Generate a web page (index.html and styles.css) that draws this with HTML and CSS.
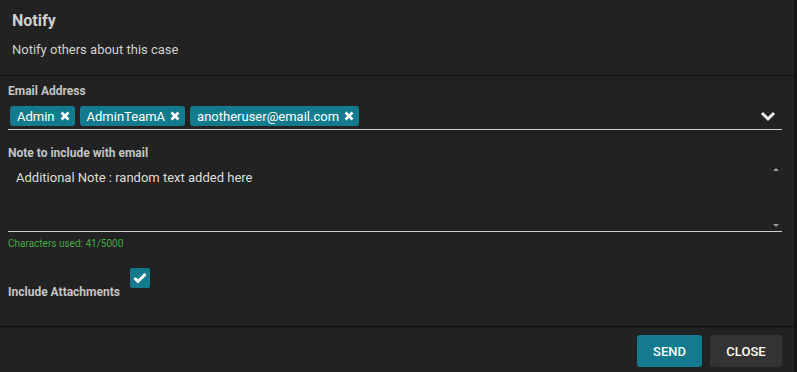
FILE: index.html
```html
<!DOCTYPE html>
<html>

<head>
  <title>Notify</title>
  <link rel="stylesheet" href="styles.css">
</head>

<body>
  <div class="dialog">
    <div class="dialog-header">
      <div class="dialog-title">Notify</div>
      <div class="dialog-subtitle">Notify others about this case</div>
    </div>

    <div class="dialog-body">
      <div class="field-label">Email Address</div>
      <div class="chip-field">
        <span class="chip">Admin
          <svg class="chip-x" width="10" height="10" viewBox="0 0 10 10"><path d="M1.5 1.5 L8.5 8.5 M8.5 1.5 L1.5 8.5" stroke="#fff" stroke-width="2.6"/></svg>
        </span>
        <span class="chip">AdminTeamA
          <svg class="chip-x" width="10" height="10" viewBox="0 0 10 10"><path d="M1.5 1.5 L8.5 8.5 M8.5 1.5 L1.5 8.5" stroke="#fff" stroke-width="2.6"/></svg>
        </span>
        <span class="chip">anotheruser@email.com
          <svg class="chip-x" width="10" height="10" viewBox="0 0 10 10"><path d="M1.5 1.5 L8.5 8.5 M8.5 1.5 L1.5 8.5" stroke="#fff" stroke-width="2.6"/></svg>
        </span>
        <svg class="chevron" width="16" height="12" viewBox="0 0 16 12">
          <path d="M2 3 L8 9 L14 3" fill="none" stroke="#eee" stroke-width="3"/>
        </svg>
      </div>

      <div class="field-label note-label">Note to include with email</div>
      <div class="note-box">
        Additional Note : random text added here
        <span class="arrow-up"></span>
        <span class="arrow-down"></span>
      </div>
      <div class="char-count">Characters used: 41/5000</div>

      <div class="attach-row">
        <span class="field-label">Include Attachments</span>
        <span class="checkbox">
          <svg width="14" height="12" viewBox="0 0 14 12">
            <path d="M1.5 6 L5 9.5 L12.5 2" fill="none" stroke="#fff" stroke-width="3"/>
          </svg>
        </span>
      </div>
    </div>

    <div class="dialog-footer">
      <button class="btn btn-send">Send</button>
      <button class="btn btn-close">Close</button>
    </div>
  </div>
  <div class="scroll-strip"></div>
</body>

</html>
```

FILE: styles.css
```css
/* Reset default margin and padding for body */
body {
  margin: 0;
  padding: 0;
  display: flex;
  height: 372px;
  overflow: hidden;
  background-color: #222;
  font-family: Roboto, 'Liberation Sans', sans-serif;
  color: #ccc;
}

/* Main dialog column */
.dialog {
  flex: 1;
  display: flex;
  flex-direction: column;
}

/* Dark strip on the right edge */
.scroll-strip {
  width: 3px;
  background-color: #141414;
}

/* Header */
.dialog-header {
  box-sizing: border-box;
  height: 76px;
  padding: 11px 12px 0 12px;
  border-bottom: 1px solid #0e0e0e;
}

.dialog-title {
  font-size: 16px;
  font-weight: bold;
  line-height: 20px;
  color: #d0d0d0;
}

.dialog-subtitle {
  font-size: 13px;
  line-height: 18px;
  margin-top: 10px;
  color: #d0d0d0;
}

/* Body */
.dialog-body {
  flex: 1;
  padding: 7px 12px 0 8px;
}

.field-label {
  font-size: 12px;
  font-weight: bold;
  line-height: 16px;
  color: #c4c4c4;
}

/* Email chips */
.chip-field {
  display: flex;
  align-items: center;
  gap: 5px;
  margin-top: 7px;
  padding: 0 0 3px 2px;
  border-bottom: 1px solid #cfcfcf;
}

.chip {
  display: inline-flex;
  align-items: center;
  height: 20px;
  padding: 0 5px 0 7px;
  background-color: #137b8d;
  border-radius: 3px;
  color: #fff;
  font-size: 13px;
}

.chip-x {
  margin-left: 5px;
}

.chevron {
  margin-left: auto;
  margin-right: 6px;
}

/* Note textarea */
.note-label {
  margin-top: 15px;
}

.note-box {
  position: relative;
  height: 61px;
  margin-top: -2px;
  padding: 10px 8px 0 8px;
  border-top: 1px solid #262626;
  border-bottom: 1px solid #cfcfcf;
  font-size: 13px;
  color: #ddd;
}

.arrow-up,
.arrow-down {
  position: absolute;
  right: 3px;
  width: 0;
  height: 0;
  border-left: 3px solid transparent;
  border-right: 3px solid transparent;
}

.arrow-up {
  top: 8px;
  border-bottom: 3px solid #999;
}

.arrow-down {
  bottom: 4px;
  border-top: 3px solid #999;
}

.char-count {
  font-size: 10px;
  line-height: 12px;
  margin-top: 6px;
  color: #43a843;
}

/* Include attachments */
.attach-row {
  display: flex;
  align-items: flex-end;
  margin-top: 18px;
}

.attach-row .field-label {
  margin-bottom: -12px;
}

.checkbox {
  display: inline-flex;
  align-items: center;
  justify-content: center;
  width: 20px;
  height: 20px;
  margin-left: 10px;
  background-color: #137b8d;
  border-radius: 2px;
}

/* Footer */
.dialog-footer {
  box-sizing: border-box;
  display: flex;
  justify-content: flex-end;
  gap: 8px;
  height: 46px;
  padding: 8px 12px 0 0;
  border-top: 1px solid #0e0e0e;
}

.btn {
  height: 32px;
  border: none;
  border-radius: 3px;
  font-family: Roboto, 'Liberation Sans', sans-serif;
  font-size: 13px;
  font-weight: 500;
  text-transform: uppercase;
  color: #fff;
  cursor: pointer;
}

.btn-send {
  width: 65px;
  background-color: #137b8d;
}

.btn-close {
  width: 72px;
  background-color: #333;
}
```
